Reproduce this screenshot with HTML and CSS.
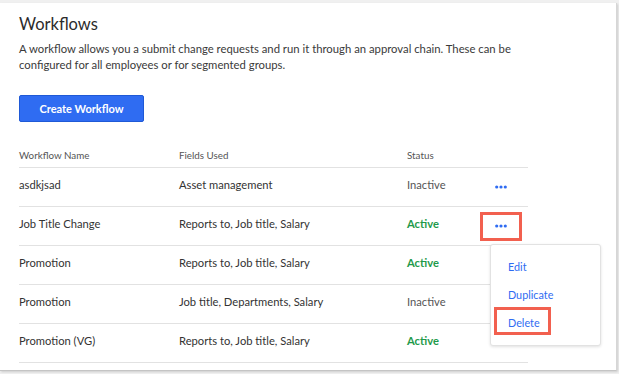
FILE: index.html
```html
<!DOCTYPE html>
<html lang="en">
<head>
    <meta charset="UTF-8">
    <title>Workflows</title>
    <link rel="stylesheet" href="styles.css">
</head>
<body>
    <div class="card">
        <h2>Workflows</h2>
        <p class="intro">A workflow allows you a submit change requests and run it through an approval chain. These can be configured for all employees or for segmented groups.</p>
        <button class="create-btn" type="button">Create Workflow</button>

        <table class="workflows">
            <thead>
                <tr>
                    <th class="col-name">Workflow Name</th>
                    <th class="col-fields">Fields Used</th>
                    <th class="col-status">Status</th>
                    <th class="col-actions"></th>
                </tr>
            </thead>
            <tbody>
                <tr>
                    <td>asdkjsad</td>
                    <td>Asset management</td>
                    <td class="inactive">Inactive</td>
                    <td class="actions">
                        <svg class="dots" width="12" height="4" viewBox="0 0 12 4"><circle cx="1.7" cy="2" r="1.6"/><circle cx="6" cy="2" r="1.6"/><circle cx="10.3" cy="2" r="1.6"/></svg>
                    </td>
                </tr>
                <tr>
                    <td>Job Title Change</td>
                    <td>Reports to, Job title, Salary</td>
                    <td class="active">Active</td>
                    <td class="actions">
                        <svg class="dots" width="12" height="4" viewBox="0 0 12 4"><circle cx="1.7" cy="2" r="1.6"/><circle cx="6" cy="2" r="1.6"/><circle cx="10.3" cy="2" r="1.6"/></svg>
                        <span class="highlight dots-highlight"></span>
                        <div class="menu">
                            <a href="#">Edit</a>
                            <a href="#">Duplicate</a>
                            <a href="#" class="delete">Delete<span class="highlight"></span></a>
                        </div>
                    </td>
                </tr>
                <tr>
                    <td>Promotion</td>
                    <td>Reports to, Job title, Salary</td>
                    <td class="active">Active</td>
                    <td class="actions"></td>
                </tr>
                <tr>
                    <td>Promotion</td>
                    <td>Job title, Departments, Salary</td>
                    <td class="inactive">Inactive</td>
                    <td class="actions"></td>
                </tr>
                <tr>
                    <td>Promotion (VG)</td>
                    <td>Reports to, Job title, Salary</td>
                    <td class="active">Active</td>
                    <td class="actions"></td>
                </tr>
            </tbody>
        </table>
    </div>
</body>
</html>
```

FILE: styles.css
```css
body {
    margin: 0;
    padding-top: 3px;
    background: #f0f0f0;
    font-family: 'Lato', 'Liberation Sans', sans-serif;
    color: #333;
    height: 374px;
    overflow: hidden;
}
.card {
    background: #fff;
    width: 597px;
    height: 367px;
    padding: 0 0 0 19px;
    border-right: 1px solid #d6d6d6;
    border-bottom: 1px solid #c4c4c4;
    box-shadow: 1px 1px 2px rgba(0, 0, 0, 0.15);
}
h2 {
    margin: 0;
    padding-top: 11px;
    font-size: 16.5px;
    font-weight: 400;
    line-height: 20px;
    color: #2b2b2b;
}
.intro {
    margin: 7px 0 0;
    width: 520px;
    font-size: 11.3px;
    line-height: 16px;
    color: #3a3a3a;
}
.create-btn {
    display: block;
    margin-top: 22px;
    width: 125px;
    height: 27px;
    background: #2f6cf2;
    border: 1px solid #1f59d6;
    border-radius: 2px;
    color: #fff;
    font-family: inherit;
    font-size: 11px;
    font-weight: 700;
    cursor: pointer;
}
.workflows {
    margin-top: 17px;
    width: 509px;
    border-collapse: collapse;
}
th {
    text-align: left;
    font-size: 9.8px;
    font-weight: 400;
    color: #555;
    height: 22px;
    line-height: 12px;
    padding: 0 0 6px;
    vertical-align: bottom;
    border-bottom: 1px solid #e2e2e2;
}
.col-name { width: 160px; }
.col-fields { width: 228px; }
.col-status { width: 76px; }
td {
    height: 39px;
    padding: 0 0 5px;
    box-sizing: border-box;
    font-size: 11.2px;
    line-height: 14px;
    color: #333;
    border-bottom: 1px solid #e2e2e2;
}
td.active {
    color: #1f9a4b;
    font-weight: 700;
}
td.inactive {
    color: #555;
}
.actions {
    position: relative;
}
.dots {
    display: block;
    margin: 5px 0 0 12px;
    fill: #2f6cf2;
}
.highlight {
    position: absolute;
    border: 3px solid #f2604f;
    box-sizing: border-box;
}
.dots-highlight {
    left: -3px;
    top: 5px;
    width: 42px;
    height: 29px;
}
.menu {
    position: absolute;
    left: 7px;
    top: 37px;
    width: 111px;
    height: 102px;
    box-sizing: border-box;
    background: #fff;
    border: 1px solid #e2e2e2;
    border-radius: 3px;
    box-shadow: 0 1px 3px rgba(0, 0, 0, 0.12);
    padding-top: 14px;
    z-index: 2;
}
.menu a {
    display: block;
    position: relative;
    color: #2f6cf2;
    text-decoration: none;
    font-size: 10.8px;
    line-height: 15px;
    padding-left: 17px;
    margin-bottom: 13px;
}
.menu .delete .highlight {
    left: 3px;
    top: -8px;
    width: 57px;
    height: 28px;
}
```
